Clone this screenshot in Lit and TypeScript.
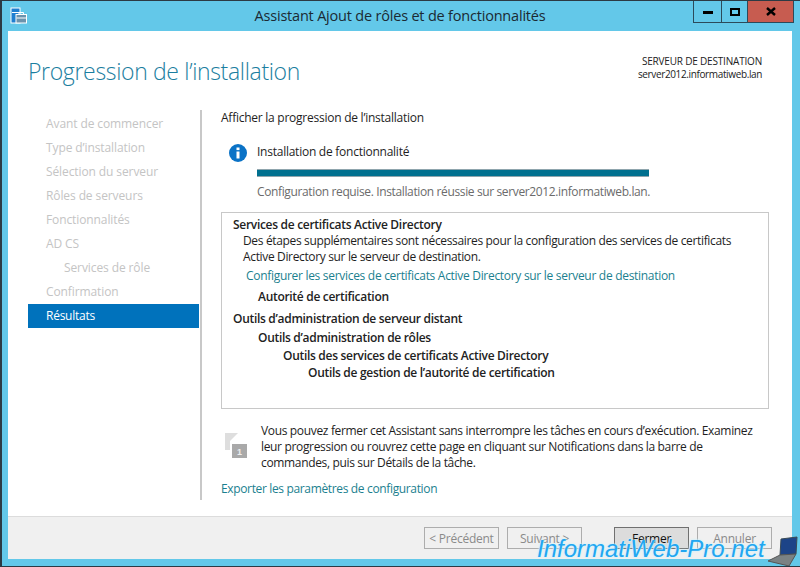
import { LitElement, html, css } from "lit";
import { customElement } from "lit/decorators.js";

@customElement("app-root")
export class AppRoot extends LitElement {
  static styles = css`
    :host { display: block; width: 800px; height: 567px; overflow: hidden; font-family: "Open Sans", "Noto Sans", sans-serif; font-size: 12px; letter-spacing: -0.25px; color: #1e1e1e; }
    .frame { position: relative; box-sizing: border-box; width: 800px; height: 567px; overflow: hidden; background: #63c8e9; border: 1px solid #2c3a44; border-width: 1px 0 1px 2px; display: flex; flex-direction: column; }
    .title { height: 30px; display: flex; align-items: flex-start; flex: none; }
    .appicon { margin: 6px 0 0 8px; flex: none; }
    .ttext { flex: 1; text-align: center; font-size: 14.5px; line-height: 30px; color: #1b2a33; letter-spacing: -0.2px; padding-left: 80px; }
    .wbtns { display: flex; margin-right: 6px; border: 1px solid #2c4a5a; border-top: 0; height: 21px; flex: none; }
    .wb { width: 27px; display: flex; align-items: center; justify-content: center; border-right: 1px solid #2c4a5a; }
    .wb.min { width: 27px; } .wb.max { width: 25px; }
    .wb.close { width: 45px; background: #c75c50; border-right: 0; }
    .body { margin: 0 8px 0 6px; background: #fff; flex: 1; display: flex; flex-direction: column; min-height: 0; }
    .head { height: 79px; flex: none; display: flex; justify-content: space-between; padding: 0 30px 0 20px; }
    h1 { margin: 0; padding-top: 20px; font-weight: 300; font-size: 23px; line-height: 40px; color: #1b7ea0; letter-spacing: -0.34px; }
    .dest { padding-top: 24px; text-align: right; font-size: 10px; line-height: 13px; letter-spacing: -0.19px; color: #222; }
    .dest .srv { letter-spacing: -0.37px; }
    .cols { flex: 1; display: flex; min-height: 0; }
    .side { width: 171px; margin-left: 20px; flex: none; padding-top: 2px; letter-spacing: -0.1px; }
    .side div { height: 24px; line-height: 24px; padding-left: 18px; color: #c4c4c4; }
    .side .sub { padding-left: 36px; }
    .side .on { background: #0072bc; color: #fff; letter-spacing: -0.25px; }
    .main { flex: 1; margin: 0 23px 16px 1px; border-left: 2px solid #c8c8c8; padding-left: 19px; display: flex; flex-direction: column; }
    .lead { line-height: 16px; height: 16px; flex: none; }
    .prog { display: flex; margin: 18px 0 0 8px; gap: 10px; flex: none; }
    .prog .txt { width: 392px; }
    .pt { line-height: 16px; height: 16px; }
    .bar { height: 8px; background: #00708f; margin-top: 9px; border-bottom: 1px solid #8fa5ad; border-top: 1px solid #8fa5ad; box-sizing: border-box; }
    .pst { color: #6b6b6b; line-height: 16px; margin-top: 7px; white-space: nowrap; letter-spacing: -0.37px; }
    .box { flex: none; box-sizing: border-box; height: 197px; margin-top: 12px; border: 1px solid #c8c8c8; padding: 4px 11px; }
    .box > div { line-height: 16px; }
    .b { font-weight: 600; color: #222; letter-spacing: -0.3px; }
    .l1 { padding-left: 25px; } .l2 { padding-left: 50px; } .l3 { padding-left: 75px; }
    .desc { padding-left: 10px; letter-spacing: -0.35px; }
    .cfg { padding: 3px 0 5px 13px; letter-spacing: -0.3px; }
    .g0 { margin-bottom: 6px; }
    .g1 { margin-top: 6px; margin-bottom: 3px; }
    .g2 { margin-bottom: 2px; }
    .g3 { margin-bottom: 1px; }
    a { color: #1b7f8f; text-decoration: none; }
    .note { display: flex; gap: 13px; margin-top: 7px; align-items: flex-start; flex: none; }
    .note svg { flex: none; margin: 17px 0 0 4px; }
    .note p { margin: 7px 0 0; line-height: 16px; width: 500px; letter-spacing: -0.34px; }
    .flagnum { font: 700 9px "Liberation Sans", sans-serif; fill: #eee; letter-spacing: 0; }
    .exp { margin-top: 10px; line-height: 16px; letter-spacing: -0.35px; flex: none; }
    .foot { height: 42px; flex: none; background: #f0f0f0; border-top: 1px solid #dcdcdc; display: flex; align-items: flex-start; padding-left: 416px; }
    button { box-sizing: border-box; width: 75px; height: 22px; margin-top: 10px; border: 1px solid #adadad; background: #f0f0f0; font: inherit; letter-spacing: inherit; color: #8a8a8a; padding: 0; margin-right: 8px; }
    button.primary { border-color: #707070; background: #dcdcdc; color: #111; margin-left: 24px; }
    .bottom { height: 7px; flex: none; }
    .mark { position: absolute; left: 535px; bottom: 0; font: italic 24px/34px "Liberation Sans", sans-serif; letter-spacing: 0; color: #22a6f0; text-shadow: 0 0 2px #c8f0ff, 0 0 2px #c8f0ff, 0 0 1px #fff; white-space: nowrap; }
    .laptop { position: absolute; left: 765px; top: 535px; }
  `;

  render() {
    return html`<div class="frame">
      <div class="title">
        <svg class="appicon" width="17" height="17" viewBox="0 0 17 17">
          <rect x="1" y="1" width="9" height="15" fill="#1f7fd0" stroke="#fff"/>
          <rect x="2" y="5" width="7" height="1" fill="#fff"/>
          <rect x="6" y="7.5" width="10.5" height="8.5" fill="#6b93ad" stroke="#fff"/>
          <path d="M9 7V5.5h4.5V7" fill="none" stroke="#fff"/>
          <path d="M6.5 11h10" stroke="#fff"/>
        </svg>
        <div class="ttext">Assistant Ajout de rôles et de fonctionnalités</div>
        <div class="wbtns">
          <div class="wb min"><svg width="10" height="4"><rect width="10" height="3" y="1" fill="#000"/></svg></div>
          <div class="wb max"><svg width="10" height="8"><rect x="1" y="1" width="8" height="6" fill="none" stroke="#000" stroke-width="2"/></svg></div>
          <div class="wb close"><svg width="10" height="9"><path d="M1 1l8 7M9 1L1 8" stroke="#000" stroke-width="2.4"/></svg></div>
        </div>
      </div>
      <div class="body">
        <div class="head">
          <h1>Progression de l’installation</h1>
          <div class="dest">SERVEUR DE DESTINATION<br><span class="srv">server2012.informatiweb.lan</span></div>
        </div>
        <div class="cols">
          <div class="side">
            <div>Avant de commencer</div><div>Type d’installation</div><div>Sélection du serveur</div>
            <div>Rôles de serveurs</div><div>Fonctionnalités</div><div>AD CS</div>
            <div class="sub">Services de rôle</div><div>Confirmation</div><div class="on">Résultats</div>
          </div>
          <div class="main">
            <div class="lead">Afficher la progression de l’installation</div>
            <div class="prog">
              <svg width="18" height="18" viewBox="0 0 18 18" style="flex:none">
                <circle cx="9" cy="9" r="9" fill="#0a72c6"/>
                <rect x="7.5" y="7.5" width="3" height="7" fill="#fff"/><rect x="7.5" y="3.5" width="3" height="2.6" fill="#fff"/>
              </svg>
              <div class="txt">
                <div class="pt">Installation de fonctionnalité</div>
                <div class="bar"></div>
                <div class="pst">Configuration requise. Installation réussie sur server2012.informatiweb.lan.</div>
              </div>
            </div>
            <div class="box">
              <div class="b">Services de certificats Active Directory</div>
              <div class="desc">Des étapes supplémentaires sont nécessaires pour la configuration des services de certificats<br>Active Directory sur le serveur de destination.</div>
              <div class="cfg"><a href="#">Configurer les services de certificats Active Directory sur le serveur de destination</a></div>
              <div class="b l1 g0">Autorité de certification</div>
              <div class="b g1">Outils d’administration de serveur distant</div>
              <div class="b l1 g2">Outils d’administration de rôles</div>
              <div class="b l2 g3">Outils des services de certificats Active Directory</div>
              <div class="b l3">Outils de gestion de l’autorité de certification</div>
            </div>
            <div class="note">
              <svg width="23" height="26" viewBox="0 0 23 26">
                <path d="M0 0H13L5 8V17H0Z" fill="#dedede"/>
                <rect x="7" y="11" width="15" height="14" fill="#a9a9a9"/>
                <text class="flagnum" x="14.5" y="22" text-anchor="middle">1</text>
              </svg>
              <p>Vous pouvez fermer cet Assistant sans interrompre les tâches en cours d’exécution. Examinez leur progression ou rouvrez cette page en cliquant sur Notifications dans la barre de commandes, puis sur Détails de la tâche.</p>
            </div>
            <div class="exp"><a href="#">Exporter les paramètres de configuration</a></div>
          </div>
        </div>
        <div class="foot">
          <button>&lt; Précédent</button><button>Suivant &gt;</button><button class="primary">Fermer</button><button>Annuler</button>
        </div>
      </div>
      <div class="bottom"></div>
      <div class="mark">InformatiWeb-Pro.net</div>
      <svg class="laptop" width="33" height="31" viewBox="0 0 33 31">
        <path d="M14 3L30 1L29 18L13 19Z" fill="#1d4488" stroke="#3a4a55"/>
        <path d="M1 25L13 19L29 18L22 30Z" fill="#7b8284" stroke="#555"/>
      </svg>
    </div>`;
  }
}
